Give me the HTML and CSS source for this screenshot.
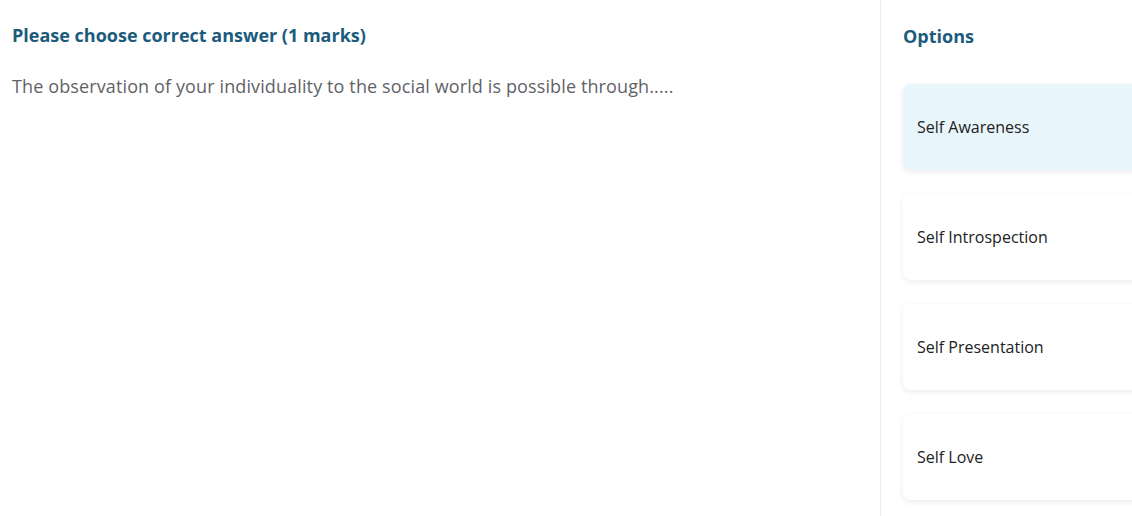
FILE: index.html
```html
<!DOCTYPE html>
<html lang="en">
    <head>
        <meta charset="UTF-8">
        <meta name="viewport" content="width=device-width, initial-scale=1.0">
        <title>Question</title>
        <link rel="stylesheet" href="styles.css">
    </head>
<body>
    <div class="page">
        <div class="question">
            <h3 class="question-title">Please choose correct answer (1 marks)</h3>
            <p class="question-text">The observation of your individuality to the social world is possible through.....</p>
        </div>
        <div class="options">
            <h3 class="options-title">Options</h3>
            <div class="option selected">Self Awareness</div>
            <div class="option">Self Introspection</div>
            <div class="option">Self Presentation</div>
            <div class="option">Self Love</div>
        </div>
    </div>
</body>
</html>
```
FILE: styles.css
```css
body {
    margin: 0;
    font-family: "Open Sans", Arial, sans-serif;
    background-color: #fff;
    overflow: hidden;
}
.page {
    display: flex;
    width: 1200px;
    height: 516px;
}
.question {
    width: 868px;
    padding: 0 0 0 12px;
    border-right: 1px solid #ececec;
}
.question-title {
    margin: 23px 0 0;
    font-size: 18px;
    line-height: 24px;
    font-weight: 700;
    color: #1b5b7c;
}
.question-text {
    margin: 27px 0 0;
    font-size: 18px;
    line-height: 24px;
    letter-spacing: 0.12px;
    color: #5f6368;
}
/* right column */
.options {
    flex: 1;
    padding: 0 0 0 22px;
}
.options-title {
    margin: 24px 0 36px;
    font-size: 18px;
    line-height: 24px;
    font-weight: 700;
    color: #1b5b7c;
}
.option {
    height: 86px;
    display: flex;
    align-items: center;
    padding-left: 14px;
    margin-bottom: 24px;
    border-radius: 8px;
    background-color: #fff;
    box-shadow: 0 2px 6px rgba(0, 0, 0, 0.08);
    font-size: 16px;
    color: #222;
}
.option.selected {
    background-color: #e8f5fb;
}
```
